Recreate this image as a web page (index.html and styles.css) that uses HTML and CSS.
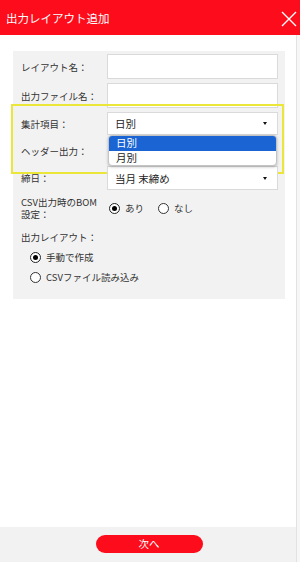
FILE: index.html
```html
<!DOCTYPE html>
<html lang="ja">
<head>
<meta charset="utf-8">
<title>出力レイアウト追加</title>
<link rel="stylesheet" href="styles.css">
</head>
<body>
<header class="titlebar">
  <h1 class="title">出力レイアウト追加</h1>
  <span class="close" aria-label="閉じる">
    <svg width="16" height="16" viewBox="0 0 16 16"><path d="M1 1 L15 15 M15 1 L1 15" stroke="#fff" stroke-width="1.4" fill="none"/></svg>
  </span>
</header>
<div class="main">
  <div class="content">
    <div class="scroll">
      <section class="panel">
        <div class="row">
          <label class="label">レイアウト名：</label>
          <div class="input"></div>
        </div>
        <div class="row">
          <label class="label">出力ファイル名：</label>
          <div class="input"></div>
        </div>
        <div class="highlight">
          <div class="row">
            <label class="label">集計項目：</label>
            <div class="select open">
              <span class="select-text">日別</span>
              <span class="caret"></span>
              <ul class="dropdown">
                <li class="option active">日別</li>
                <li class="option">月別</li>
              </ul>
            </div>
          </div>
          <div class="row row-radio">
            <label class="label">ヘッダー出力：</label>
            <div class="radios"></div>
          </div>
        </div>
        <div class="row">
          <label class="label">締日：</label>
          <div class="select">
            <span class="select-text">当月 末締め</span>
            <span class="caret"></span>
          </div>
        </div>
        <div class="row row-bom">
          <label class="label label-2line">CSV出力時のBOM<br>設定：</label>
          <div class="radios">
            <span class="radio checked"></span><span class="radio-text">あり</span>
            <span class="radio"></span><span class="radio-text">なし</span>
          </div>
        </div>
        <div class="block-label">出力レイアウト：</div>
        <div class="radio-list">
          <div class="radio-item"><span class="radio checked"></span><span class="radio-text">手動で作成</span></div>
          <div class="radio-item"><span class="radio"></span><span class="radio-text">CSVファイル読み込み</span></div>
        </div>
      </section>
    </div>
    <footer class="footer">
      <button class="next">次へ</button>
    </footer>
  </div>
  <div class="track"></div>
</div>
</body>
</html>
```
FILE: styles.css
```css
* { box-sizing: border-box; }
html, body { margin: 0; padding: 0; }
body {
  width: 300px;
  height: 562px;
  display: flex;
  flex-direction: column;
  font-family: "Noto Sans CJK JP", "Noto Sans", sans-serif;
  color: #333;
  background: #fff;
  overflow: hidden;
}
.titlebar {
  height: 35px;
  flex: none;
  background: #fd0c1c;
  display: flex;
  align-items: center;
  justify-content: space-between;
  padding: 0 3px 0 6px;
}
.title {
  margin: 0;
  font-size: 11.5px;
  font-weight: normal;
  color: #fff;
}
.close { display: flex; width: 16px; height: 16px; margin-top: 2px; }
.main {
  flex: 1;
  display: flex;
  min-height: 0;
}
.content {
  flex: 1;
  display: flex;
  flex-direction: column;
}
.scroll { flex: 1; }
.track {
  width: 4px;
  flex: none;
  border-left: 1px solid #e2e2e2;
  background: #f6f6f6;
}
.panel {
  margin: 16px 0 0 13px;
  width: 272px;
  background: #f2f2f2;
  padding: 3px 7px 12px 8px;
  display: flex;
  flex-direction: column;
}
.row {
  display: flex;
  align-items: center;
  margin-bottom: 4px;
}
.label {
  width: 86px;
  flex: none;
  font-size: 9.5px;
  line-height: 12px;
  color: #333;
}
.input {
  flex: 1;
  height: 25px;
  background: #fff;
  border: 1px solid #dadada;
}
.highlight { position: relative; }
.highlight::after {
  content: "";
  position: absolute;
  left: -10px;
  right: -6px;
  top: -8px;
  bottom: -8px;
  border: 2.5px solid #ebe63a;
  pointer-events: none;
}
.select {
  flex: 1;
  height: 24px;
  background: #fff;
  border: 1px solid #dadada;
  display: flex;
  align-items: center;
  justify-content: space-between;
  padding: 0 10px 0 7px;
  position: relative;
}
.select.open { height: 23px; }
.select-text { font-size: 10.5px; color: #222; }
.caret {
  width: 0; height: 0;
  border-left: 2.5px solid transparent;
  border-right: 2.5px solid transparent;
  border-top: 3px solid #111;
}
.dropdown {
  position: absolute;
  left: 0;
  right: 0;
  top: 22px;
  margin: 0;
  padding: 0;
  list-style: none;
  background: #fff;
  border: 1px solid #c4c4c4;
  border-radius: 4px;
  box-shadow: 0 1px 3px rgba(0,0,0,0.25);
  overflow: hidden;
  z-index: 2;
}
.option {
  height: 14.5px;
  line-height: 14.5px;
  padding-left: 7px;
  font-size: 10.5px;
  color: #222;
}
.option.active { background: #1b64d3; color: #fff; }
.row-radio { height: 23px; }
.radios { display: flex; align-items: center; padding-left: 2px; }
.radio {
  width: 11px;
  height: 11px;
  border-radius: 50%;
  border: 1px solid #333;
  background: #fff;
  flex: none;
  display: flex;
  align-items: center;
  justify-content: center;
}
.radio.checked { border: 1.5px solid #222; }
.radio.checked::after {
  content: "";
  width: 5px;
  height: 5px;
  border-radius: 50%;
  background: #000;
}
.radio-text { font-size: 9.5px; margin: 0 14px 0 5px; color: #333; }
.row-bom { align-items: center; height: 28px; margin-bottom: 0; }
.label-2line { line-height: 12.5px; }
.block-label {
  font-size: 9.5px;
  line-height: 12px;
  margin-top: 9px;
}
.radio-list {
  padding-left: 9px;
  margin-top: 4px;
  display: flex;
  flex-direction: column;
}
.radio-item { height: 20px; display: flex; align-items: center; }
.footer {
  height: 35px;
  flex: none;
  background: #f2f2f2;
  display: flex;
  justify-content: center;
  padding-top: 8px;
}
.next {
  width: 107px;
  height: 18px;
  border: none;
  border-radius: 9px;
  background: #fd0c1c;
  color: #fff;
  font-family: "Noto Sans CJK JP", sans-serif;
  font-size: 10.5px;
  line-height: 18px;
  padding: 0;
  margin-left: 2px;
}
```
